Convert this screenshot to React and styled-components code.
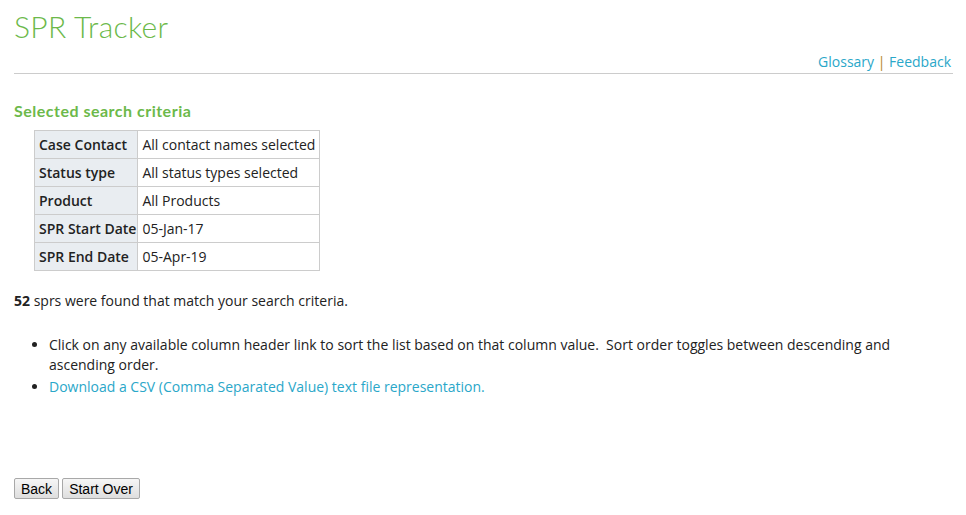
import React from "react";
import styled, { createGlobalStyle } from "styled-components";

const Global = createGlobalStyle`
  html, body { margin: 0; padding: 0; background: #fff; }
  body { font-family: "Open Sans", "Liberation Sans", sans-serif; font-size: 14px; color: #222; }
`;

const Page = styled.div`
  padding: 0 13px 0 14px;
`;

const Title = styled.h1`
  margin: 0;
  padding-top: 8px;
  font-family: "Lato", "DejaVu Sans", sans-serif;
  font-weight: 300;
  font-size: 30px;
  line-height: 36px;
  letter-spacing: 0.3px;
  color: #6cb94a;
`;

const LinkBar = styled.div`
  display: flex;
  justify-content: flex-end;
  align-items: baseline;
  white-space: pre;
  padding: 8px 2px 1px 0;
  height: 20px;
  line-height: 20px;
  border-bottom: 1px solid #cccccc;
`;

const Link = styled.a`
  color: #2aa7c9;
  text-decoration: none;
  cursor: pointer;
`;

const Sep = styled.span`
  color: #b5852c;
`;

const SectionTitle = styled.h2`
  margin: 27px 0 9px;
  font-family: "Lato", "DejaVu Sans", sans-serif;
  font-weight: 700;
  font-size: 16px;
  line-height: 20px;
  letter-spacing: 0.5px;
  color: #6cb94a;
`;

const Criteria = styled.table`
  margin-left: 20px;
  border-collapse: collapse;
  border: 1px solid #cccccc;
`;

const Th = styled.th`
  background: #e9edf1;
  font-weight: 600;
  text-align: left;
  border: 1px solid #cccccc;
  padding: 4px 1px 4px 4px;
  line-height: 19px;
  white-space: nowrap;
`;

const Td = styled.td`
  border: 1px solid #cccccc;
  padding: 4px 4px 4px 4px;
  line-height: 19px;
  white-space: nowrap;
`;

const Summary = styled.p`
  margin: 20px 0 0;
  line-height: 20px;
`;

const Notes = styled.ul`
  margin: 24px 0 0;
  padding-left: 35px;
  line-height: 20px;
  max-width: 880px;
`;

const Note = styled.li`
  margin-bottom: 2px;
`;

const Buttons = styled.div`
  display: flex;
  gap: 3px;
  margin-top: 81px;
`;

const Button = styled.button`
  font-family: "Liberation Sans", Arial, sans-serif;
  font-size: 14px;
  color: #000;
  height: 21px;
  padding: 1px 6px;
  border: 1px solid #a8a8a8;
  border-radius: 2px;
  background: linear-gradient(#f6f6f6, #dedede);
  cursor: pointer;
`;

const rows = [
  ["Case Contact", "All contact names selected"],
  ["Status type", "All status types selected"],
  ["Product", "All Products"],
  ["SPR Start Date", "05-Jan-17"],
  ["SPR End Date", "05-Apr-19"],
];

export default function App() {
  return (
    <Page>
      <Global />
      <Title>SPR Tracker</Title>
      <LinkBar>
        <Link>Glossary</Link>
        <Sep> | </Sep>
        <Link>Feedback</Link>
      </LinkBar>
      <SectionTitle>Selected search criteria</SectionTitle>
      <Criteria>
        <tbody>
          {rows.map(([k, v]) => (
            <tr key={k}>
              <Th>{k}</Th>
              <Td>{v}</Td>
            </tr>
          ))}
        </tbody>
      </Criteria>
      <Summary>
        <b>52</b> sprs were found that match your search criteria.
      </Summary>
      <Notes>
        <Note>
          Click on any available column header link to sort the list based on that column value.&nbsp; Sort order toggles between descending and ascending order.
        </Note>
        <Note>
          <Link>Download a CSV (Comma Separated Value) text file representation.</Link>
        </Note>
      </Notes>
      <Buttons>
        <Button>Back</Button>
        <Button>Start Over</Button>
      </Buttons>
    </Page>
  );
}
